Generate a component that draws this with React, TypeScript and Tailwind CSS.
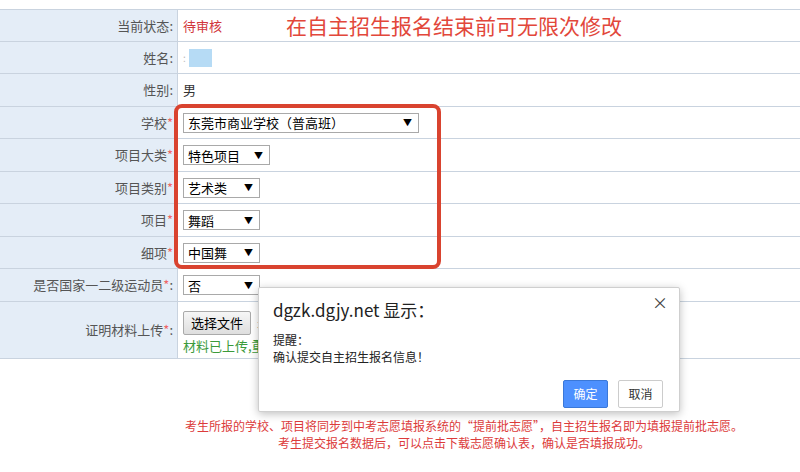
import React from 'react';

const FONT = '"Noto Sans CJK SC", "Noto Sans", "Liberation Sans", sans-serif';

function Select({ value, width }: { value: string; width: string }) {
  return (
    <div className={`flex h-[20px] items-center justify-between border border-[#a9a9a9] bg-white pl-[4px] pr-[6px] text-[13px] leading-none text-black ${width}`}>
      <span>{value}</span>
      <span className="text-[9px]">▼</span>
    </div>
  );
}

function Row({ label, star, colon, h, children }: { label: string; star?: boolean; colon?: boolean; h: string; children?: React.ReactNode }) {
  return (
    <div className={`flex border-b border-[#c9d3df] ${h}`}>
      <div className="flex w-[178px] shrink-0 items-center justify-end border-r border-[#c9d3df] bg-[#e4edf7] pr-[4px] text-[13px] text-[#555]">
        <span>{label}</span>
        {star && <span className="text-[#e66]">*</span>}
        {colon && <span>:</span>}
      </div>
      <div className="flex flex-1 items-center pl-[5px] text-[13px] text-[#333]">{children}</div>
    </div>
  );
}

export default function App() {
  return (
    <div className="relative h-[472px] w-[800px] overflow-hidden bg-white" style={{ fontFamily: FONT }}>
      <div className="h-[9px]" />
      <div className="border-t border-[#c9d3df]">
        <Row label="当前状态" colon h="h-[32px]">
          <span className="text-[#d1363c]">待审核</span>
          <span className="ml-[64px] text-[21px] leading-none text-[#e2473b]">在自主招生报名结束前可无限次修改</span>
        </Row>
        <Row label="姓名" colon h="h-[32px]">
          <span className="text-[10px] text-[#bbb]">:</span>
          <span className="ml-[3px] h-[18px] w-[23px] bg-[#b6dbf5]" />
        </Row>
        <Row label="性别" colon h="h-[33px]">
          <span>男</span>
        </Row>
        <Row label="学校" star h="h-[32px]">
          <Select value="东莞市商业学校（普高班）" width="w-[236px]" />
        </Row>
        <Row label="项目大类" star h="h-[33px]">
          <Select value="特色项目" width="w-[87px]" />
        </Row>
        <Row label="项目类别" star h="h-[32px]">
          <Select value="艺术类" width="w-[77px]" />
        </Row>
        <Row label="项目" star h="h-[33px]">
          <Select value="舞蹈" width="w-[77px]" />
        </Row>
        <Row label="细项" star h="h-[32px]">
          <Select value="中国舞" width="w-[77px]" />
        </Row>
        <Row label="是否国家一二级运动员" star colon h="h-[33px]">
          <Select value="否" width="w-[77px]" />
        </Row>
        <Row label="证明材料上传" star colon h="h-[57px]">
          <div className="flex flex-col items-start gap-[4px] pt-[2px]">
            <div className="flex items-center gap-[6px]">
              <div className="flex h-[24px] items-center rounded-[2px] border border-[#aaa] bg-gradient-to-b from-[#f6f6f6] to-[#dedede] px-[7px] text-[13px] text-black">
                选择文件
              </div>
              <span className="text-[12px] text-[#888]">未选择任何文件</span>
            </div>
            <span className="text-[13px] leading-none text-[#3a9a3a]">材料已上传,重新上传将覆盖原材料</span>
          </div>
        </Row>
      </div>

      <div className="mt-[58px] flex flex-col items-center pl-[128px] text-[12px] leading-[17px] text-[#dc3b3b]">
        <p>考生所报的学校、项目将同步到中考志愿填报系统的“提前批志愿”，自主招生报名即为填报提前批志愿。</p>
        <p>考生提交报名数据后，可以点击下载志愿确认表，确认是否填报成功。</p>
      </div>

      {/* red annotation box */}
      <div className="absolute left-[174px] top-[104px] h-[165px] w-[267px] rounded-[8px] border-[4px] border-[#d9432f]" />

      {/* browser confirm dialog */}
      <div className="absolute left-[258px] top-[287px] flex h-[125px] w-[422px] flex-col rounded-[2px] border border-[#cfcfcf] bg-white px-[14px] shadow-[0_2px_8px_rgba(0,0,0,0.25)]">
        <span className="absolute right-[11px] top-[6px] text-[16px] leading-none text-[#444]">×</span>
        <div className="pt-[13px] text-[17px] leading-none text-[#222]">dgzk.dgjy.net 显示：</div>
        <div className="mt-[13px] text-[12px] leading-[17px] text-[#222]">
          <p>提醒：</p>
          <p>确认提交自主招生报名信息！</p>
        </div>
        <div className="mt-auto mb-[3px] flex justify-end gap-[10px] pr-[2px]">
          <div className="flex h-[28px] w-[45px] items-center justify-center rounded-[2px] border border-[#3b78d8] bg-[#4d90fe] text-[12px] text-white">确定</div>
          <div className="flex h-[28px] w-[45px] items-center justify-center rounded-[2px] border border-[#ccc] bg-white text-[12px] text-[#333]">取消</div>
        </div>
      </div>
    </div>
  );
}
